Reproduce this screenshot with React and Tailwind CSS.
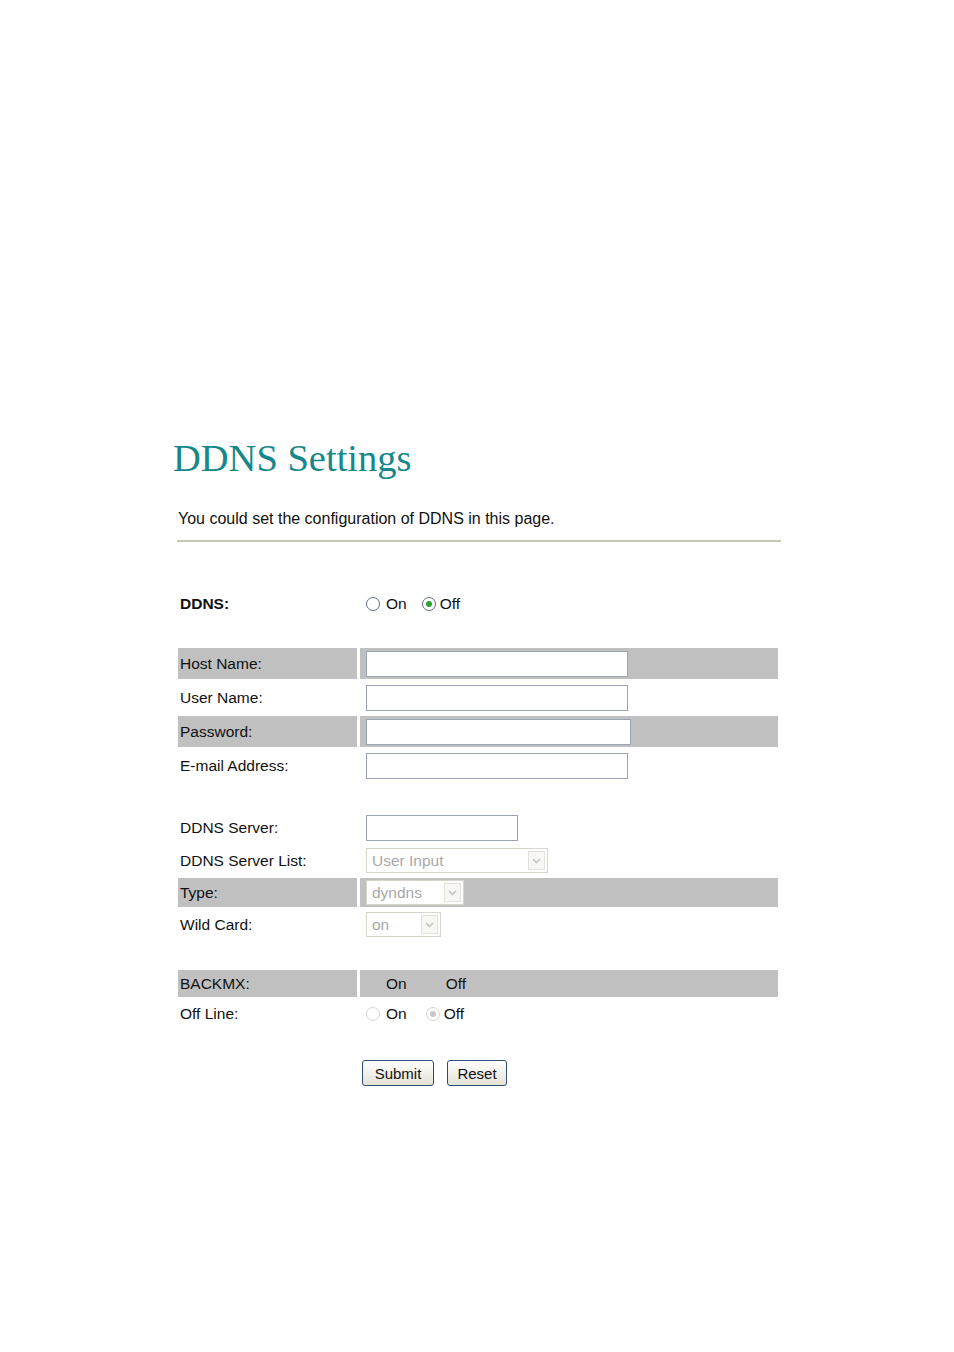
import React from "react";

function Radio({ checked, disabled }) {
  const ring = disabled ? "border-[#d6d6d0] bg-white" : "border-[#5f6f80] bg-white";
  const dot = disabled ? "bg-[#c8c8c8]" : "bg-[#2fa52f]";
  return (
    <span className={`inline-flex h-[14px] w-[14px] items-center justify-center rounded-full border ${ring}`}>
      {checked ? <span className={`h-[6px] w-[6px] rounded-full ${dot}`} /> : null}
    </span>
  );
}

function TextBox({ width }) {
  return <span className={`block h-[26px] border border-[#9aa6b3] bg-white ${width}`} />;
}

function Select({ value, width }) {
  return (
    <span className={`flex h-[25px] items-center justify-between border border-[#d8d6cc] bg-white pl-[5px] pr-[2px] ${width}`}>
      <span className="text-[#a8a8a8]">{value}</span>
      <span className="flex h-[19px] w-[17px] items-center justify-center border border-[#e4e2da] bg-[#f6f6f3]">
        <svg width="9" height="6" viewBox="0 0 9 6">
          <path d="M1 1l3.5 3.5L8 1" fill="none" stroke="#c4c4c4" strokeWidth="1.6" />
        </svg>
      </span>
    </span>
  );
}

function Row({ label, gray, bold, height = "h-[31px]", children }) {
  const bg = gray ? "bg-[#c0c0c0]" : "";
  return (
    <div className={`flex gap-[3px] ${height}`}>
      <div className={`flex w-[179px] items-center pl-[2px] ${bg} ${bold ? "font-bold" : ""}`}>{label}</div>
      <div className={`flex flex-1 items-center pl-[6px] ${bg}`}>{children}</div>
    </div>
  );
}

export default function App() {
  return (
    <div className="min-h-[1352px] bg-white font-['Liberation_Sans',Arial,sans-serif] text-[15.5px] text-[#111]">
      <div className="w-[781px] pl-[173px] pt-[438px]">
        <h1 className="font-['Liberation_Serif','Times_New_Roman',serif] text-[38.5px] leading-[40px] text-[#16878a]">DDNS Settings</h1>
        <p className="ml-[5px] mt-[32px] text-[16px] leading-[18px]">You could set the configuration of DDNS in this page.</p>
        <div className="ml-[4px] mt-[12px] h-[2px] w-[604px] bg-[#c6c6b4]" />

        <div className="ml-[5px] mt-[48px] flex w-[600px] flex-col">
          <Row label="DDNS:" bold height="h-[28px]">
            <span className="flex items-center gap-[6px]">
              <Radio />
              <span>On</span>
            </span>
            <span className="ml-[15px] flex items-center gap-[4px]">
              <Radio checked />
              <span>Off</span>
            </span>
          </Row>

          <div className="mt-[30px] flex flex-col gap-[3px]">
            <Row label="Host Name:" gray>
              <TextBox width="w-[262px]" />
            </Row>
            <Row label="User Name:">
              <TextBox width="w-[262px]" />
            </Row>
            <Row label="Password:" gray>
              <TextBox width="w-[265px]" />
            </Row>
            <Row label="E-mail Address:">
              <TextBox width="w-[262px]" />
            </Row>
          </div>

          <div className="mt-[32px] flex flex-col gap-[3px]">
            <Row label="DDNS Server:" height="h-[30px]">
              <TextBox width="w-[152px]" />
            </Row>
            <Row label="DDNS Server List:" height="h-[29px]">
              <Select value="User Input" width="w-[182px]" />
            </Row>
            <Row label="Type:" gray height="h-[29px]">
              <Select value="dyndns" width="w-[98px]" />
            </Row>
            <Row label="Wild Card:" height="h-[29px]">
              <Select value="on" width="w-[75px]" />
            </Row>
          </div>

          <div className="mt-[31px] flex flex-col gap-[3px]">
            <Row label="BACKMX:" gray height="h-[27px]">
              <span className="ml-[20px]">On</span>
              <span className="ml-[39px]">Off</span>
            </Row>
            <Row label="Off Line:" height="h-[28px]">
              <span className="flex items-center gap-[6px]">
                <Radio disabled />
                <span>On</span>
              </span>
              <span className="ml-[19px] flex items-center gap-[4px]">
                <Radio checked disabled />
                <span>Off</span>
              </span>
            </Row>
          </div>

          <div className="mt-[32px] flex gap-[13px] pl-[184px]">
            <button type="button" className="h-[26px] w-[72px] rounded-[3px] border border-[#2d4f73] bg-gradient-to-b from-white to-[#e4e2d6] text-[15px] leading-none text-[#111]">Submit</button>
            <button type="button" className="h-[26px] w-[60px] rounded-[3px] border border-[#2d4f73] bg-gradient-to-b from-white to-[#e4e2d6] text-[15px] leading-none text-[#111]">Reset</button>
          </div>
        </div>
      </div>
    </div>
  );
}
